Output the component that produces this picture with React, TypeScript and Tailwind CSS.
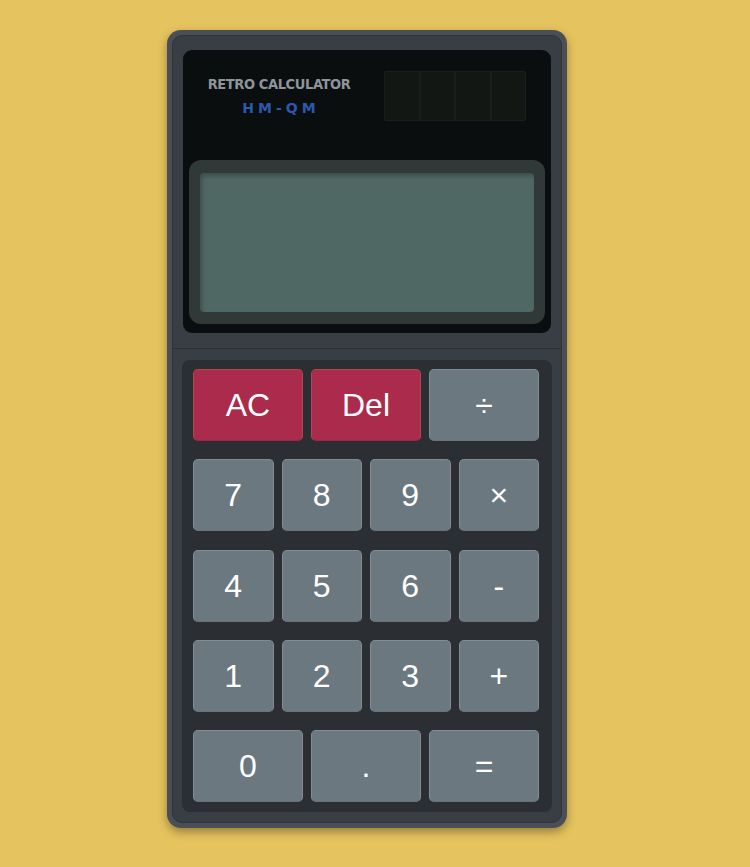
import React from "react";

type Key = { label: string; kind?: "danger" | "op" };

const rows: Key[][] = [
  [{ label: "AC", kind: "danger" }, { label: "Del", kind: "danger" }, { label: "÷", kind: "op" }],
  [{ label: "7" }, { label: "8" }, { label: "9" }, { label: "×", kind: "op" }],
  [{ label: "4" }, { label: "5" }, { label: "6" }, { label: "-", kind: "op" }],
  [{ label: "1" }, { label: "2" }, { label: "3" }, { label: "+", kind: "op" }],
  [{ label: "0" }, { label: "." }, { label: "=", kind: "op" }],
];

function KeyButton({ k }: { k: Key }) {
  const danger = k.kind === "danger";
  return (
    <button
      type="button"
      className={
        danger
          ? "flex h-[72px] flex-1 items-center justify-center rounded-[5px] border border-[#b3474f] border-b-[#9c2844] bg-[#aa2b4b] text-[32px] text-white"
          : "flex h-[72px] flex-1 items-center justify-center rounded-[5px] border border-[#828c92] border-b-[#68747b] bg-[#6c787f] text-[32px] text-white"
      }
      style={{ fontFamily: '"Liberation Sans", Arial, sans-serif' }}
    >
      {k.label}
    </button>
  );
}

function SolarPanel() {
  return (
    <div className="flex h-[50px] w-[142px] gap-[2px] rounded-[2px] bg-[#1a1d1f] p-[1px]">
      {[0, 1, 2, 3].map((i) => (
        <div key={i} className="flex-1 bg-[#131713]" />
      ))}
    </div>
  );
}

export default function App() {
  return (
    <div className="flex min-h-[867px] justify-center bg-[#e5c35e] pr-4 pt-[30px]">
      <div className="h-[798px] w-[400px] rounded-[14px] bg-[#4a4f56] p-[5px] shadow-[0_4px_10px_rgba(0,0,0,0.35)]">
        <div className="flex h-full flex-col rounded-[10px] border border-[#2f333a] bg-[#393d44]">
          {/* top: brand + display */}
          <div className="px-[10px] pb-[15px] pt-[14px]">
            <div className="flex h-[283px] flex-col rounded-[9px] bg-[#0b0e0f]">
              <div className="flex h-[110px] items-start justify-between pl-[26px] pr-[25px] pt-[21px]">
                <div className="flex w-[140px] flex-col items-center">
                  <span
                    className="mt-[4px] whitespace-nowrap text-[14.5px] font-bold leading-[18px] tracking-[-0.4px] text-[#8d959c]"
                    style={{ fontFamily: '"DejaVu Sans Condensed", "DejaVu Sans", sans-serif' }}
                  >
                    RETRO CALCULATOR
                  </span>
                  <span
                    className="mt-[6px] whitespace-nowrap pl-[4px] text-[14px] font-bold leading-[18px] tracking-[4px] text-[#2d58b0]"
                    style={{ fontFamily: '"DejaVu Sans", sans-serif' }}
                  >
                    HM-QM
                  </span>
                </div>
                <SolarPanel />
              </div>
              <div className="mx-[6px] h-[164px] rounded-[12px] bg-[#313838] px-[11px] pb-[12px] pt-[13px]">
                <div className="h-full rounded-[4px] bg-[#506864] shadow-[inset_2px_3px_4px_rgba(0,0,0,0.25)]" />
              </div>
            </div>
          </div>

          <div className="h-px bg-[#2d3137]" />

          {/* keypad */}
          <div className="flex-1 px-[9px] pb-[10px] pt-[11px]">
            <div className="flex h-full flex-col gap-[18.25px] rounded-[8px] bg-[#2b2f33] pb-[7px] pl-[11px] pr-[13px] pt-[9px]">
              {rows.map((row, i) => (
                <div key={i} className="flex gap-[8px]">
                  {row.map((k) => (
                    <KeyButton key={k.label} k={k} />
                  ))}
                </div>
              ))}
            </div>
          </div>
        </div>
      </div>
    </div>
  );
}
